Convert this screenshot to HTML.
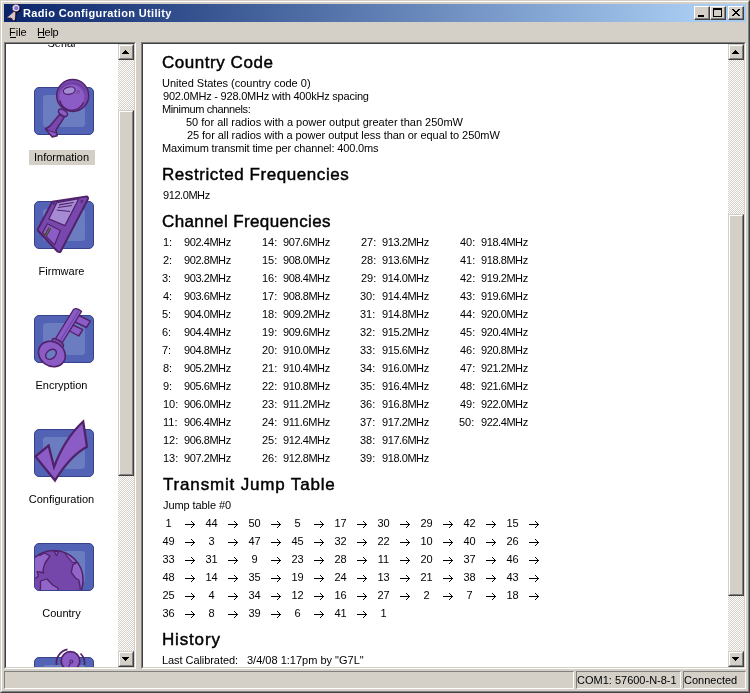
<!DOCTYPE html><html><head><meta charset="utf-8"><style>
html,body{margin:0;padding:0}body{width:750px;height:693px;overflow:hidden;position:relative;background:#D4D0C8;font-family:"Liberation Sans",sans-serif}
.t{position:absolute;white-space:pre;line-height:20px}
.chk{background-color:#fff;background-image:repeating-conic-gradient(#D4D0C8 0 25%,#fff 0 50%);background-size:2px 2px}
</style></head><body><div style="position:absolute;left:0;top:0;width:750px;height:693px;overflow:hidden;will-change:transform">
<div style="position:absolute;left:0px;top:0px;width:750px;height:693px;box-sizing:border-box;border-top:1px solid #D4D0C8;border-left:1px solid #D4D0C8;border-right:1px solid #404040;border-bottom:1px solid #404040"></div>
<div style="position:absolute;left:1px;top:1px;width:748px;height:691px;box-sizing:border-box;border-top:1px solid #FFFFFF;border-left:1px solid #FFFFFF;border-right:1px solid #808080;border-bottom:1px solid #808080"></div>
<div style="position:absolute;left:4px;top:4px;width:742px;height:18px;background:linear-gradient(to right,#0A246A 0px,#A6CAF0 686px)"></div>
<div style="position:absolute;left:694px;top:6px;width:16px;height:14px;background:#D4D0C8;box-sizing:border-box;border-top:1px solid #FFFFFF;border-left:1px solid #FFFFFF;border-right:1px solid #404040;border-bottom:1px solid #404040"></div>
<div style="position:absolute;left:695px;top:7px;width:14px;height:12px;box-sizing:border-box;border-right:1px solid #808080;border-bottom:1px solid #808080"></div>
<div style="position:absolute;left:710px;top:6px;width:16px;height:14px;background:#D4D0C8;box-sizing:border-box;border-top:1px solid #FFFFFF;border-left:1px solid #FFFFFF;border-right:1px solid #404040;border-bottom:1px solid #404040"></div>
<div style="position:absolute;left:711px;top:7px;width:14px;height:12px;box-sizing:border-box;border-right:1px solid #808080;border-bottom:1px solid #808080"></div>
<div style="position:absolute;left:728px;top:6px;width:16px;height:14px;background:#D4D0C8;box-sizing:border-box;border-top:1px solid #FFFFFF;border-left:1px solid #FFFFFF;border-right:1px solid #404040;border-bottom:1px solid #404040"></div>
<div style="position:absolute;left:729px;top:7px;width:14px;height:12px;box-sizing:border-box;border-right:1px solid #808080;border-bottom:1px solid #808080"></div>
<div style="position:absolute;left:698px;top:15px;width:6px;height:2px;background:#000"></div>
<div style="position:absolute;left:713px;top:8px;width:9px;height:9px;box-sizing:border-box;border:1px solid #000;border-top-width:2px"></div>
<svg style="position:absolute;left:732px;top:9px" width="8" height="7" shape-rendering="crispEdges"><rect x="0" y="0" width="2" height="1"/><rect x="6" y="0" width="2" height="1"/><rect x="1" y="1" width="2" height="1"/><rect x="5" y="1" width="2" height="1"/><rect x="2" y="2" width="2" height="1"/><rect x="4" y="2" width="2" height="1"/><rect x="3" y="3" width="2" height="1"/><rect x="3" y="3" width="2" height="1"/><rect x="4" y="4" width="2" height="1"/><rect x="2" y="4" width="2" height="1"/><rect x="5" y="5" width="2" height="1"/><rect x="1" y="5" width="2" height="1"/><rect x="6" y="6" width="2" height="1"/><rect x="0" y="6" width="2" height="1"/></svg>
<svg style="position:absolute;left:4px;top:3px" width="20" height="20" viewBox="4 3 20 20">
<path d="M14.6 11.9 L16.5 12.2 L16 21 L14.5 21.3 L12.2 18.8 L7.5 18.5 Z" fill="#000"/>
<path d="M14.1 11.4 L15.5 11.7 L15 20.3 L13.5 20.6 L11.5 18 L7 17.7 Z" fill="#CFCAC2" stroke="#8A2A80" stroke-width="0.9" stroke-dasharray="1 1.2"/>
<circle cx="16.8" cy="8.8" r="3.8" fill="#000"/>
<circle cx="16" cy="8" r="3.6" fill="#E4E0D8" stroke="#8A2A80" stroke-width="0.9" stroke-dasharray="1.3 1.1"/>
<circle cx="16.2" cy="8.2" r="2.1" fill="#7A78E6"/>
</svg>
<div style="position:absolute;left:10px;top:37px;width:6px;height:1px;background:#000"></div>
<div style="position:absolute;left:38px;top:37px;width:7px;height:1px;background:#000"></div>
<div style="position:absolute;left:4px;top:42px;width:132px;height:627px;background:#fff;box-sizing:border-box;border-top:1px solid #808080;border-left:1px solid #808080;border-right:1px solid #FFFFFF;border-bottom:1px solid #FFFFFF"></div><div style="position:absolute;left:5px;top:43px;width:130px;height:625px;box-sizing:border-box;border-top:1px solid #404040;border-left:1px solid #404040;border-right:1px solid #D4D0C8;border-bottom:1px solid #D4D0C8"></div>
<div style="position:absolute;left:141px;top:42px;width:605px;height:627px;background:#fff;box-sizing:border-box;border-top:1px solid #808080;border-left:1px solid #808080;border-right:1px solid #FFFFFF;border-bottom:1px solid #FFFFFF"></div><div style="position:absolute;left:142px;top:43px;width:603px;height:625px;box-sizing:border-box;border-top:1px solid #404040;border-left:1px solid #404040;border-right:1px solid #D4D0C8;border-bottom:1px solid #D4D0C8"></div>
<div class="chk" style="position:absolute;left:118px;top:60px;width:16px;height:591px;"></div><div style="position:absolute;left:118px;top:44px;width:16px;height:16px;background:#D4D0C8;box-sizing:border-box;border-top:1px solid #D4D0C8;border-left:1px solid #D4D0C8;border-right:1px solid #404040;border-bottom:1px solid #404040"></div><div style="position:absolute;left:119px;top:45px;width:14px;height:14px;box-sizing:border-box;border-top:1px solid #FFFFFF;border-left:1px solid #FFFFFF;border-right:1px solid #808080;border-bottom:1px solid #808080"></div><div style="position:absolute;left:118px;top:651px;width:16px;height:16px;background:#D4D0C8;box-sizing:border-box;border-top:1px solid #D4D0C8;border-left:1px solid #D4D0C8;border-right:1px solid #404040;border-bottom:1px solid #404040"></div><div style="position:absolute;left:119px;top:652px;width:14px;height:14px;box-sizing:border-box;border-top:1px solid #FFFFFF;border-left:1px solid #FFFFFF;border-right:1px solid #808080;border-bottom:1px solid #808080"></div><div style="position:absolute;left:118px;top:110px;width:16px;height:366px;background:#D4D0C8;box-sizing:border-box;border-top:1px solid #D4D0C8;border-left:1px solid #D4D0C8;border-right:1px solid #404040;border-bottom:1px solid #404040"></div><div style="position:absolute;left:119px;top:111px;width:14px;height:364px;box-sizing:border-box;border-top:1px solid #FFFFFF;border-left:1px solid #FFFFFF;border-right:1px solid #808080;border-bottom:1px solid #808080"></div><svg style="position:absolute;left:122px;top:50px" width="7" height="4" shape-rendering="crispEdges"><rect x="3" y="0" width="1" height="1"/><rect x="2" y="1" width="3" height="1"/><rect x="1" y="2" width="5" height="1"/><rect x="0" y="3" width="7" height="1"/></svg><svg style="position:absolute;left:122px;top:657px" width="7" height="4" shape-rendering="crispEdges"><rect x="0" y="0" width="7" height="1"/><rect x="1" y="1" width="5" height="1"/><rect x="2" y="2" width="3" height="1"/><rect x="3" y="3" width="1" height="1"/></svg>
<div class="chk" style="position:absolute;left:728px;top:60px;width:16px;height:591px;"></div><div style="position:absolute;left:728px;top:44px;width:16px;height:16px;background:#D4D0C8;box-sizing:border-box;border-top:1px solid #D4D0C8;border-left:1px solid #D4D0C8;border-right:1px solid #404040;border-bottom:1px solid #404040"></div><div style="position:absolute;left:729px;top:45px;width:14px;height:14px;box-sizing:border-box;border-top:1px solid #FFFFFF;border-left:1px solid #FFFFFF;border-right:1px solid #808080;border-bottom:1px solid #808080"></div><div style="position:absolute;left:728px;top:651px;width:16px;height:16px;background:#D4D0C8;box-sizing:border-box;border-top:1px solid #D4D0C8;border-left:1px solid #D4D0C8;border-right:1px solid #404040;border-bottom:1px solid #404040"></div><div style="position:absolute;left:729px;top:652px;width:14px;height:14px;box-sizing:border-box;border-top:1px solid #FFFFFF;border-left:1px solid #FFFFFF;border-right:1px solid #808080;border-bottom:1px solid #808080"></div><div style="position:absolute;left:728px;top:214px;width:16px;height:382px;background:#D4D0C8;box-sizing:border-box;border-top:1px solid #D4D0C8;border-left:1px solid #D4D0C8;border-right:1px solid #404040;border-bottom:1px solid #404040"></div><div style="position:absolute;left:729px;top:215px;width:14px;height:380px;box-sizing:border-box;border-top:1px solid #FFFFFF;border-left:1px solid #FFFFFF;border-right:1px solid #808080;border-bottom:1px solid #808080"></div><svg style="position:absolute;left:732px;top:50px" width="7" height="4" shape-rendering="crispEdges"><rect x="3" y="0" width="1" height="1"/><rect x="2" y="1" width="3" height="1"/><rect x="1" y="2" width="5" height="1"/><rect x="0" y="3" width="7" height="1"/></svg><svg style="position:absolute;left:732px;top:657px" width="7" height="4" shape-rendering="crispEdges"><rect x="0" y="0" width="7" height="1"/><rect x="1" y="1" width="5" height="1"/><rect x="2" y="2" width="3" height="1"/><rect x="3" y="3" width="1" height="1"/></svg>
<div style="position:absolute;left:4px;top:671px;width:570px;height:18px;box-sizing:border-box;border-top:1px solid #808080;border-left:1px solid #808080;border-right:1px solid #FFFFFF;border-bottom:1px solid #FFFFFF"></div>
<div style="position:absolute;left:576px;top:671px;width:105px;height:18px;box-sizing:border-box;border-top:1px solid #808080;border-left:1px solid #808080;border-right:1px solid #FFFFFF;border-bottom:1px solid #FFFFFF"></div>
<div style="position:absolute;left:683px;top:671px;width:63px;height:18px;box-sizing:border-box;border-top:1px solid #808080;border-left:1px solid #808080;border-right:1px solid #FFFFFF;border-bottom:1px solid #FFFFFF"></div>
<div style="position:absolute;left:29px;top:150px;width:66px;height:15px;background:#D4D0C8"></div>
<svg style="position:absolute;left:6px;top:44px" width="112" height="623" viewBox="6 44 112 623">
<defs>
<clipPath id="c0"><rect x="35" y="-26" width="58" height="46" rx="4"/></clipPath>
<clipPath id="c1"><rect x="35" y="88" width="58" height="46" rx="4"/></clipPath>
<clipPath id="c2"><rect x="35" y="202" width="58" height="46" rx="4"/></clipPath>
<clipPath id="c3"><rect x="35" y="316" width="58" height="46" rx="4"/></clipPath>
<clipPath id="c4"><rect x="35" y="430" width="58" height="46" rx="4"/></clipPath>
<clipPath id="c5"><rect x="35" y="544" width="58" height="46" rx="4"/></clipPath>
<clipPath id="c6"><rect x="35" y="658" width="58" height="46" rx="4"/></clipPath>
</defs>
<rect x="34.5" y="87.5" width="59" height="47" rx="4.5" fill="#5262B4" stroke="#37418C"/>
<rect x="43" y="95" width="42" height="32" rx="3" fill="#6C7CC0"/>
<rect x="34.5" y="201.5" width="59" height="47" rx="4.5" fill="#5262B4" stroke="#37418C"/>
<rect x="43" y="209" width="42" height="32" rx="3" fill="#6C7CC0"/>
<rect x="34.5" y="315.5" width="59" height="47" rx="4.5" fill="#5262B4" stroke="#37418C"/>
<rect x="43" y="323" width="42" height="32" rx="3" fill="#6C7CC0"/>
<rect x="34.5" y="429.5" width="59" height="47" rx="4.5" fill="#5262B4" stroke="#37418C"/>
<rect x="43" y="437" width="42" height="32" rx="3" fill="#6C7CC0"/>
<rect x="34.5" y="543.5" width="59" height="47" rx="4.5" fill="#5262B4" stroke="#37418C"/>
<rect x="43" y="551" width="42" height="32" rx="3" fill="#6C7CC0"/>
<rect x="34.5" y="657.5" width="59" height="47" rx="4.5" fill="#5262B4" stroke="#37418C"/>
<rect x="43" y="665" width="42" height="32" rx="3" fill="#6C7CC0"/>
<g stroke="#50226A" stroke-linejoin="round">
<path d="M59.4 114.8 L64.5 116.8 L56 130 L57.2 135.8 L52.3 136.9 L45.4 129 L50 126 Z" fill="#7848AE" stroke-width="1.5"/>
<path d="M47.3 130 L50.5 131.2 L55.5 132.6 L55.6 135.3 L52.6 135.6 Z" fill="#8C5CC6" stroke-width="0"/>
<path d="M46.5 129.2 L50.5 131.2 L56 132.8" fill="none" stroke-width="1"/>
<ellipse cx="63" cy="112.8" rx="5" ry="2.7" transform="rotate(32 63 112.8)" fill="#8C5CC6" stroke-width="1.4"/>
<circle cx="72.7" cy="95.5" r="16" fill="#7848AE" stroke-width="1.5"/>
<path d="M60 90 A15 15 0 0 1 86 92" fill="none" stroke="#6A3C9E" stroke-width="1.2"/>
<circle cx="71.8" cy="97" r="12.4" fill="#8C5CC6" stroke-width="0"/>
<path d="M59.8 100.5 A12.4 12.4 0 0 0 83.5 102.5" fill="none" stroke-width="1.4"/>
<ellipse cx="69.2" cy="90.6" rx="6" ry="3.6" transform="rotate(-12 69.2 90.6)" fill="#A58BD3" stroke-width="1.2"/>
<circle cx="78.2" cy="92.2" r="1.2" fill="#A58BD3" stroke-width="0.7"/>
</g>
<g stroke="#50226A" stroke-linejoin="round">
<path d="M52.4 201.8 L86.8 196.4 Q89 197.5 87.5 200 L60.5 251.8 Q59 252.5 57.5 251.5 L37.8 230.5 Q37.3 229.5 38 228.8 Z" fill="#7848AE" stroke-width="1.9"/>
<path d="M56.8 202.7 L78.8 198.7 L64.9 225.6 L48.8 218.9 Z" fill="#A58BD3" stroke-width="1.2"/>
<path d="M47.4 223.8 L60.4 230.5 L54.6 244.8 L42.5 232.7 Z" fill="#8C5CC6" stroke-width="1.2"/>
<path d="M49.8 227.8 L45.6 235.9" stroke="#3A3A34" stroke-width="2.8"/>
<path d="M49.8 227.8 L45.6 235.9" stroke="#6E7658" stroke-width="1"/>
<path d="M59 204.8 L73.6 202.5 M58 207.5 L71.8 205.5 M56.8 210 L70 211.5" fill="none" stroke-width="1.2"/>
<circle cx="54.1" cy="203.8" r="1" fill="none" stroke-width="0.9"/>
<circle cx="81.9" cy="201.4" r="1.2" fill="none" stroke-width="0.9"/>
</g>
<g stroke="#50226A" stroke-linejoin="round">
<path d="M78 315 L90.4 321.2 L86.4 327.5 L75 322 Z" fill="#8C5CC6" stroke-width="1.4"/>
<path d="M73 325 L82.8 329.7 L78.8 336 L69.5 331 Z" fill="#8C5CC6" stroke-width="1.4"/>
<path d="M73.5 309.5 Q77 307 81.5 311.5 L62 343 L55 339.5 Z" fill="#8C5CC6" stroke-width="1.4"/>
<path d="M78.5 311 L60 341" fill="none" stroke="#6A44B0" stroke-width="1.1"/>
<ellipse cx="57.8" cy="343" rx="6.5" ry="2.8" transform="rotate(33 57.8 343)" fill="#7848AE" stroke-width="1.4"/>
<ellipse cx="51.9" cy="354" rx="14" ry="12" transform="rotate(35 51.9 354)" fill="#8C5CC6" stroke-width="1.6"/>
<ellipse cx="51" cy="354.3" rx="6" ry="4.3" transform="rotate(-40 51 354.3)" fill="#6C7CC0" stroke-width="1.4"/>
</g>
<path d="M35.5 456.4 L48.6 445.5 L54 467 Q65 438 83.2 421.5 L87 446.8 Q70 456 55 480.5 Z" fill="#8C5CC6" stroke="#50226A" stroke-width="2.3" stroke-linejoin="miter" stroke-miterlimit="6"/>
<clipPath id="gl"><circle cx="53.8" cy="579.8" r="29.3"/></clipPath>
<g clip-path="url(#c5)" stroke="#50226A" stroke-linejoin="round">
<circle cx="53.8" cy="579.8" r="29.3" fill="#7647AA" stroke-width="0"/>
<g clip-path="url(#gl)">
<path d="M28 552 L36 553 L40 555.5 L44.5 553 L50 556 L45 563 L43 570 L43.7 573 L40 572 L37 571.6 L38.5 576 L36 578 L33 579 L28 575 Z" fill="#9266C8" stroke-width="1.3"/>
<path d="M40.5 581 L47 579 L52.7 585 L57.9 588 L58.5 597 L39 597 L40.5 588 Z" fill="#9266C8" stroke-width="1.3"/>
<path d="M54.1 551.5 L58.6 551.8 L56.4 555.6 Z" fill="#9266C8" stroke-width="1.1"/>
<path d="M64 552 L67.2 556.3 L72 562 L75.8 562.7 L78 560 L74 555 Z" fill="#9266C8" stroke-width="1.1"/>
<path d="M79 561 L72.8 564.9 L71.3 572.4 L75.8 578.3 L78.8 580 L80 586 L80.5 597 L92 597 L92 558 Z" fill="#9266C8" stroke-width="1.3"/>
</g>
<circle cx="53.8" cy="579.8" r="29.3" fill="none" stroke-width="1.5"/>
</g>
<g stroke="#50226A" fill="none">
<path d="M56.5 665 A14 14 0 0 1 67.5 649.3" stroke-width="1.7"/>
<path d="M80.5 653.5 A14 14 0 0 1 84.5 665" stroke-width="1.7"/>
<circle cx="70.5" cy="661" r="9.3" fill="#8C5CC6" stroke-width="1.7"/>
<circle cx="71.3" cy="661.5" r="1.5" stroke-width="1.1"/>
<path d="M70.5 663 L68.5 667" stroke-width="1.1"/>
</g>
</svg>
<div class="t" style="left:23px;top:3px;font:bold 11px 'Liberation Sans',sans-serif;line-height:20px;letter-spacing:0.346px;color:#fff">Radio Configuration Utility</div>
<div class="t" style="left:9px;top:22px;font:11px 'Liberation Sans',sans-serif;line-height:20px;color:#000">File</div>
<div class="t" style="left:37px;top:22px;font:11px 'Liberation Sans',sans-serif;line-height:20px;letter-spacing:-0.333px;color:#000">Help</div>
<div class="t" style="left:162px;top:53px;font:17px 'Liberation Sans',sans-serif;line-height:20px;letter-spacing:0.545px;-webkit-text-stroke:0.45px #000;color:#000">Country Code</div>
<div class="t" style="left:162px;top:165px;font:17px 'Liberation Sans',sans-serif;line-height:20px;letter-spacing:0.571px;-webkit-text-stroke:0.45px #000;color:#000">Restricted Frequencies</div>
<div class="t" style="left:162px;top:212px;font:17px 'Liberation Sans',sans-serif;line-height:20px;letter-spacing:0.389px;-webkit-text-stroke:0.45px #000;color:#000">Channel Frequencies</div>
<div class="t" style="left:163px;top:475px;font:17px 'Liberation Sans',sans-serif;line-height:20px;letter-spacing:0.833px;-webkit-text-stroke:0.45px #000;color:#000">Transmit Jump Table</div>
<div class="t" style="left:162px;top:630px;font:17px 'Liberation Sans',sans-serif;line-height:20px;letter-spacing:0.833px;-webkit-text-stroke:0.45px #000;color:#000">History</div>
<div class="t" style="left:162px;top:73px;font:11px 'Liberation Sans',sans-serif;line-height:20px;color:#000">United States (country code 0)</div>
<div class="t" style="left:163px;top:86px;font:11px 'Liberation Sans',sans-serif;line-height:20px;letter-spacing:-0.211px;color:#000">902.0MHz - 928.0MHz with 400kHz spacing</div>
<div class="t" style="left:162px;top:99px;font:11px 'Liberation Sans',sans-serif;line-height:20px;letter-spacing:-0.375px;color:#000">Minimum channels:</div>
<div class="t" style="left:186px;top:112px;font:11px 'Liberation Sans',sans-serif;line-height:20px;color:#000">50 for all radios with a power output greater than 250mW</div>
<div class="t" style="left:187px;top:125px;font:11px 'Liberation Sans',sans-serif;line-height:20px;letter-spacing:-0.062px;color:#000">25 for all radios with a power output less than or equal to 250mW</div>
<div class="t" style="left:162px;top:138px;font:11px 'Liberation Sans',sans-serif;line-height:20px;letter-spacing:-0.146px;color:#000">Maximum transmit time per channel: 400.0ms</div>
<div class="t" style="left:163px;top:185px;font:11px 'Liberation Sans',sans-serif;line-height:20px;letter-spacing:-0.429px;color:#000">912.0MHz</div>
<div class="t" style="left:163px;top:495px;font:11px 'Liberation Sans',sans-serif;line-height:20px;letter-spacing:-0.083px;color:#000">Jump table #0</div>
<div class="t" style="left:162px;top:650px;font:11px 'Liberation Sans',sans-serif;line-height:20px;letter-spacing:-0.067px;color:#000">Last Calibrated:</div>
<div class="t" style="left:247px;top:650px;font:11px 'Liberation Sans',sans-serif;line-height:20px;color:#000">3/4/08 1:17pm by &quot;G7L&quot;</div>
<div class="t" style="left:577px;top:670px;font:11px 'Liberation Sans',sans-serif;line-height:20px;color:#000">COM1: 57600-N-8-1</div>
<div class="t" style="left:684px;top:670px;font:11px 'Liberation Sans',sans-serif;line-height:20px;color:#000">Connected</div>
<div class="t" style="left:163px;top:232px;font:11px 'Liberation Sans',sans-serif;line-height:20px;color:#000">1:</div>
<div class="t" style="left:184px;top:232px;font:11px 'Liberation Sans',sans-serif;line-height:20px;letter-spacing:-0.429px;color:#000">902.4MHz</div>
<div class="t" style="left:163px;top:250px;font:11px 'Liberation Sans',sans-serif;line-height:20px;color:#000">2:</div>
<div class="t" style="left:184px;top:250px;font:11px 'Liberation Sans',sans-serif;line-height:20px;letter-spacing:-0.429px;color:#000">902.8MHz</div>
<div class="t" style="left:162px;top:268px;font:11px 'Liberation Sans',sans-serif;line-height:20px;color:#000">3:</div>
<div class="t" style="left:184px;top:268px;font:11px 'Liberation Sans',sans-serif;line-height:20px;letter-spacing:-0.429px;color:#000">903.2MHz</div>
<div class="t" style="left:163px;top:286px;font:11px 'Liberation Sans',sans-serif;line-height:20px;color:#000">4:</div>
<div class="t" style="left:184px;top:286px;font:11px 'Liberation Sans',sans-serif;line-height:20px;letter-spacing:-0.429px;color:#000">903.6MHz</div>
<div class="t" style="left:162px;top:304px;font:11px 'Liberation Sans',sans-serif;line-height:20px;color:#000">5:</div>
<div class="t" style="left:184px;top:304px;font:11px 'Liberation Sans',sans-serif;line-height:20px;letter-spacing:-0.429px;color:#000">904.0MHz</div>
<div class="t" style="left:162px;top:322px;font:11px 'Liberation Sans',sans-serif;line-height:20px;color:#000">6:</div>
<div class="t" style="left:184px;top:322px;font:11px 'Liberation Sans',sans-serif;line-height:20px;letter-spacing:-0.429px;color:#000">904.4MHz</div>
<div class="t" style="left:162px;top:340px;font:11px 'Liberation Sans',sans-serif;line-height:20px;color:#000">7:</div>
<div class="t" style="left:184px;top:340px;font:11px 'Liberation Sans',sans-serif;line-height:20px;letter-spacing:-0.429px;color:#000">904.8MHz</div>
<div class="t" style="left:163px;top:358px;font:11px 'Liberation Sans',sans-serif;line-height:20px;color:#000">8:</div>
<div class="t" style="left:184px;top:358px;font:11px 'Liberation Sans',sans-serif;line-height:20px;letter-spacing:-0.429px;color:#000">905.2MHz</div>
<div class="t" style="left:163px;top:376px;font:11px 'Liberation Sans',sans-serif;line-height:20px;color:#000">9:</div>
<div class="t" style="left:184px;top:376px;font:11px 'Liberation Sans',sans-serif;line-height:20px;letter-spacing:-0.429px;color:#000">905.6MHz</div>
<div class="t" style="left:163px;top:394px;font:11px 'Liberation Sans',sans-serif;line-height:20px;color:#000">10:</div>
<div class="t" style="left:184px;top:394px;font:11px 'Liberation Sans',sans-serif;line-height:20px;letter-spacing:-0.429px;color:#000">906.0MHz</div>
<div class="t" style="left:163px;top:412px;font:11px 'Liberation Sans',sans-serif;line-height:20px;color:#000">11:</div>
<div class="t" style="left:184px;top:412px;font:11px 'Liberation Sans',sans-serif;line-height:20px;letter-spacing:-0.429px;color:#000">906.4MHz</div>
<div class="t" style="left:163px;top:430px;font:11px 'Liberation Sans',sans-serif;line-height:20px;color:#000">12:</div>
<div class="t" style="left:184px;top:430px;font:11px 'Liberation Sans',sans-serif;line-height:20px;letter-spacing:-0.429px;color:#000">906.8MHz</div>
<div class="t" style="left:163px;top:448px;font:11px 'Liberation Sans',sans-serif;line-height:20px;color:#000">13:</div>
<div class="t" style="left:184px;top:448px;font:11px 'Liberation Sans',sans-serif;line-height:20px;letter-spacing:-0.429px;color:#000">907.2MHz</div>
<div class="t" style="left:262px;top:232px;font:11px 'Liberation Sans',sans-serif;line-height:20px;color:#000">14:</div>
<div class="t" style="left:283px;top:232px;font:11px 'Liberation Sans',sans-serif;line-height:20px;letter-spacing:-0.429px;color:#000">907.6MHz</div>
<div class="t" style="left:262px;top:250px;font:11px 'Liberation Sans',sans-serif;line-height:20px;color:#000">15:</div>
<div class="t" style="left:283px;top:250px;font:11px 'Liberation Sans',sans-serif;line-height:20px;letter-spacing:-0.429px;color:#000">908.0MHz</div>
<div class="t" style="left:262px;top:268px;font:11px 'Liberation Sans',sans-serif;line-height:20px;color:#000">16:</div>
<div class="t" style="left:283px;top:268px;font:11px 'Liberation Sans',sans-serif;line-height:20px;letter-spacing:-0.429px;color:#000">908.4MHz</div>
<div class="t" style="left:262px;top:286px;font:11px 'Liberation Sans',sans-serif;line-height:20px;color:#000">17:</div>
<div class="t" style="left:283px;top:286px;font:11px 'Liberation Sans',sans-serif;line-height:20px;letter-spacing:-0.429px;color:#000">908.8MHz</div>
<div class="t" style="left:262px;top:304px;font:11px 'Liberation Sans',sans-serif;line-height:20px;color:#000">18:</div>
<div class="t" style="left:283px;top:304px;font:11px 'Liberation Sans',sans-serif;line-height:20px;letter-spacing:-0.429px;color:#000">909.2MHz</div>
<div class="t" style="left:262px;top:322px;font:11px 'Liberation Sans',sans-serif;line-height:20px;color:#000">19:</div>
<div class="t" style="left:283px;top:322px;font:11px 'Liberation Sans',sans-serif;line-height:20px;letter-spacing:-0.429px;color:#000">909.6MHz</div>
<div class="t" style="left:262px;top:340px;font:11px 'Liberation Sans',sans-serif;line-height:20px;color:#000">20:</div>
<div class="t" style="left:283px;top:340px;font:11px 'Liberation Sans',sans-serif;line-height:20px;letter-spacing:-0.429px;color:#000">910.0MHz</div>
<div class="t" style="left:262px;top:358px;font:11px 'Liberation Sans',sans-serif;line-height:20px;color:#000">21:</div>
<div class="t" style="left:283px;top:358px;font:11px 'Liberation Sans',sans-serif;line-height:20px;letter-spacing:-0.429px;color:#000">910.4MHz</div>
<div class="t" style="left:262px;top:376px;font:11px 'Liberation Sans',sans-serif;line-height:20px;color:#000">22:</div>
<div class="t" style="left:283px;top:376px;font:11px 'Liberation Sans',sans-serif;line-height:20px;letter-spacing:-0.429px;color:#000">910.8MHz</div>
<div class="t" style="left:262px;top:394px;font:11px 'Liberation Sans',sans-serif;line-height:20px;color:#000">23:</div>
<div class="t" style="left:283px;top:394px;font:11px 'Liberation Sans',sans-serif;line-height:20px;letter-spacing:-0.286px;color:#000">911.2MHz</div>
<div class="t" style="left:262px;top:412px;font:11px 'Liberation Sans',sans-serif;line-height:20px;color:#000">24:</div>
<div class="t" style="left:283px;top:412px;font:11px 'Liberation Sans',sans-serif;line-height:20px;letter-spacing:-0.286px;color:#000">911.6MHz</div>
<div class="t" style="left:262px;top:430px;font:11px 'Liberation Sans',sans-serif;line-height:20px;color:#000">25:</div>
<div class="t" style="left:283px;top:430px;font:11px 'Liberation Sans',sans-serif;line-height:20px;letter-spacing:-0.429px;color:#000">912.4MHz</div>
<div class="t" style="left:262px;top:448px;font:11px 'Liberation Sans',sans-serif;line-height:20px;color:#000">26:</div>
<div class="t" style="left:283px;top:448px;font:11px 'Liberation Sans',sans-serif;line-height:20px;letter-spacing:-0.429px;color:#000">912.8MHz</div>
<div class="t" style="left:361px;top:232px;font:11px 'Liberation Sans',sans-serif;line-height:20px;color:#000">27:</div>
<div class="t" style="left:382px;top:232px;font:11px 'Liberation Sans',sans-serif;line-height:20px;letter-spacing:-0.429px;color:#000">913.2MHz</div>
<div class="t" style="left:361px;top:250px;font:11px 'Liberation Sans',sans-serif;line-height:20px;color:#000">28:</div>
<div class="t" style="left:382px;top:250px;font:11px 'Liberation Sans',sans-serif;line-height:20px;letter-spacing:-0.429px;color:#000">913.6MHz</div>
<div class="t" style="left:361px;top:268px;font:11px 'Liberation Sans',sans-serif;line-height:20px;color:#000">29:</div>
<div class="t" style="left:382px;top:268px;font:11px 'Liberation Sans',sans-serif;line-height:20px;letter-spacing:-0.429px;color:#000">914.0MHz</div>
<div class="t" style="left:360px;top:286px;font:11px 'Liberation Sans',sans-serif;line-height:20px;color:#000">30:</div>
<div class="t" style="left:382px;top:286px;font:11px 'Liberation Sans',sans-serif;line-height:20px;letter-spacing:-0.429px;color:#000">914.4MHz</div>
<div class="t" style="left:360px;top:304px;font:11px 'Liberation Sans',sans-serif;line-height:20px;color:#000">31:</div>
<div class="t" style="left:382px;top:304px;font:11px 'Liberation Sans',sans-serif;line-height:20px;letter-spacing:-0.429px;color:#000">914.8MHz</div>
<div class="t" style="left:360px;top:322px;font:11px 'Liberation Sans',sans-serif;line-height:20px;color:#000">32:</div>
<div class="t" style="left:382px;top:322px;font:11px 'Liberation Sans',sans-serif;line-height:20px;letter-spacing:-0.429px;color:#000">915.2MHz</div>
<div class="t" style="left:360px;top:340px;font:11px 'Liberation Sans',sans-serif;line-height:20px;color:#000">33:</div>
<div class="t" style="left:382px;top:340px;font:11px 'Liberation Sans',sans-serif;line-height:20px;letter-spacing:-0.429px;color:#000">915.6MHz</div>
<div class="t" style="left:360px;top:358px;font:11px 'Liberation Sans',sans-serif;line-height:20px;color:#000">34:</div>
<div class="t" style="left:382px;top:358px;font:11px 'Liberation Sans',sans-serif;line-height:20px;letter-spacing:-0.429px;color:#000">916.0MHz</div>
<div class="t" style="left:360px;top:376px;font:11px 'Liberation Sans',sans-serif;line-height:20px;color:#000">35:</div>
<div class="t" style="left:382px;top:376px;font:11px 'Liberation Sans',sans-serif;line-height:20px;letter-spacing:-0.429px;color:#000">916.4MHz</div>
<div class="t" style="left:360px;top:394px;font:11px 'Liberation Sans',sans-serif;line-height:20px;color:#000">36:</div>
<div class="t" style="left:382px;top:394px;font:11px 'Liberation Sans',sans-serif;line-height:20px;letter-spacing:-0.429px;color:#000">916.8MHz</div>
<div class="t" style="left:360px;top:412px;font:11px 'Liberation Sans',sans-serif;line-height:20px;color:#000">37:</div>
<div class="t" style="left:382px;top:412px;font:11px 'Liberation Sans',sans-serif;line-height:20px;letter-spacing:-0.429px;color:#000">917.2MHz</div>
<div class="t" style="left:360px;top:430px;font:11px 'Liberation Sans',sans-serif;line-height:20px;color:#000">38:</div>
<div class="t" style="left:382px;top:430px;font:11px 'Liberation Sans',sans-serif;line-height:20px;letter-spacing:-0.429px;color:#000">917.6MHz</div>
<div class="t" style="left:360px;top:448px;font:11px 'Liberation Sans',sans-serif;line-height:20px;color:#000">39:</div>
<div class="t" style="left:382px;top:448px;font:11px 'Liberation Sans',sans-serif;line-height:20px;letter-spacing:-0.429px;color:#000">918.0MHz</div>
<div class="t" style="left:460px;top:232px;font:11px 'Liberation Sans',sans-serif;line-height:20px;color:#000">40:</div>
<div class="t" style="left:481px;top:232px;font:11px 'Liberation Sans',sans-serif;line-height:20px;letter-spacing:-0.429px;color:#000">918.4MHz</div>
<div class="t" style="left:460px;top:250px;font:11px 'Liberation Sans',sans-serif;line-height:20px;color:#000">41:</div>
<div class="t" style="left:481px;top:250px;font:11px 'Liberation Sans',sans-serif;line-height:20px;letter-spacing:-0.429px;color:#000">918.8MHz</div>
<div class="t" style="left:460px;top:268px;font:11px 'Liberation Sans',sans-serif;line-height:20px;color:#000">42:</div>
<div class="t" style="left:481px;top:268px;font:11px 'Liberation Sans',sans-serif;line-height:20px;letter-spacing:-0.429px;color:#000">919.2MHz</div>
<div class="t" style="left:460px;top:286px;font:11px 'Liberation Sans',sans-serif;line-height:20px;color:#000">43:</div>
<div class="t" style="left:481px;top:286px;font:11px 'Liberation Sans',sans-serif;line-height:20px;letter-spacing:-0.429px;color:#000">919.6MHz</div>
<div class="t" style="left:460px;top:304px;font:11px 'Liberation Sans',sans-serif;line-height:20px;color:#000">44:</div>
<div class="t" style="left:481px;top:304px;font:11px 'Liberation Sans',sans-serif;line-height:20px;letter-spacing:-0.429px;color:#000">920.0MHz</div>
<div class="t" style="left:460px;top:322px;font:11px 'Liberation Sans',sans-serif;line-height:20px;color:#000">45:</div>
<div class="t" style="left:481px;top:322px;font:11px 'Liberation Sans',sans-serif;line-height:20px;letter-spacing:-0.429px;color:#000">920.4MHz</div>
<div class="t" style="left:460px;top:340px;font:11px 'Liberation Sans',sans-serif;line-height:20px;color:#000">46:</div>
<div class="t" style="left:481px;top:340px;font:11px 'Liberation Sans',sans-serif;line-height:20px;letter-spacing:-0.429px;color:#000">920.8MHz</div>
<div class="t" style="left:460px;top:358px;font:11px 'Liberation Sans',sans-serif;line-height:20px;color:#000">47:</div>
<div class="t" style="left:481px;top:358px;font:11px 'Liberation Sans',sans-serif;line-height:20px;letter-spacing:-0.429px;color:#000">921.2MHz</div>
<div class="t" style="left:460px;top:376px;font:11px 'Liberation Sans',sans-serif;line-height:20px;color:#000">48:</div>
<div class="t" style="left:481px;top:376px;font:11px 'Liberation Sans',sans-serif;line-height:20px;letter-spacing:-0.429px;color:#000">921.6MHz</div>
<div class="t" style="left:460px;top:394px;font:11px 'Liberation Sans',sans-serif;line-height:20px;color:#000">49:</div>
<div class="t" style="left:481px;top:394px;font:11px 'Liberation Sans',sans-serif;line-height:20px;letter-spacing:-0.429px;color:#000">922.0MHz</div>
<div class="t" style="left:459px;top:412px;font:11px 'Liberation Sans',sans-serif;line-height:20px;color:#000">50:</div>
<div class="t" style="left:481px;top:412px;font:11px 'Liberation Sans',sans-serif;line-height:20px;letter-spacing:-0.429px;color:#000">922.4MHz</div>
<div style="position:absolute;left:6px;top:44px;width:112px;height:623px;overflow:hidden">
<div class="t" style="left:-4.5px;top:-11px;width:120px;text-align:center;font:11px 'Liberation Sans',sans-serif;line-height:20px">Serial</div>
<div class="t" style="left:-4.5px;top:103px;width:120px;text-align:center;font:11px 'Liberation Sans',sans-serif;line-height:20px">Information</div>
<div class="t" style="left:-4.5px;top:217px;width:120px;text-align:center;font:11px 'Liberation Sans',sans-serif;line-height:20px">Firmware</div>
<div class="t" style="left:-4.5px;top:331px;width:120px;text-align:center;font:11px 'Liberation Sans',sans-serif;line-height:20px">Encryption</div>
<div class="t" style="left:-4.5px;top:445px;width:120px;text-align:center;font:11px 'Liberation Sans',sans-serif;line-height:20px">Configuration</div>
<div class="t" style="left:-4.5px;top:559px;width:120px;text-align:center;font:11px 'Liberation Sans',sans-serif;line-height:20px">Country</div>
</div>
<div class="t" style="left:148.5px;top:513px;width:40px;text-align:center;font:11px 'Liberation Sans',sans-serif;line-height:20px">1</div>
<svg style="position:absolute;left:185px;top:521px" width="10" height="7" shape-rendering="crispEdges"><rect x="0" y="3" width="10" height="1"/><rect x="6" y="0" width="1" height="1"/><rect x="7" y="1" width="1" height="1"/><rect x="8" y="2" width="1" height="3"/><rect x="7" y="5" width="1" height="1"/><rect x="6" y="6" width="1" height="1"/></svg>
<div class="t" style="left:191.5px;top:513px;width:40px;text-align:center;font:11px 'Liberation Sans',sans-serif;line-height:20px">44</div>
<svg style="position:absolute;left:228px;top:521px" width="10" height="7" shape-rendering="crispEdges"><rect x="0" y="3" width="10" height="1"/><rect x="6" y="0" width="1" height="1"/><rect x="7" y="1" width="1" height="1"/><rect x="8" y="2" width="1" height="3"/><rect x="7" y="5" width="1" height="1"/><rect x="6" y="6" width="1" height="1"/></svg>
<div class="t" style="left:234.5px;top:513px;width:40px;text-align:center;font:11px 'Liberation Sans',sans-serif;line-height:20px">50</div>
<svg style="position:absolute;left:271px;top:521px" width="10" height="7" shape-rendering="crispEdges"><rect x="0" y="3" width="10" height="1"/><rect x="6" y="0" width="1" height="1"/><rect x="7" y="1" width="1" height="1"/><rect x="8" y="2" width="1" height="3"/><rect x="7" y="5" width="1" height="1"/><rect x="6" y="6" width="1" height="1"/></svg>
<div class="t" style="left:277.5px;top:513px;width:40px;text-align:center;font:11px 'Liberation Sans',sans-serif;line-height:20px">5</div>
<svg style="position:absolute;left:314px;top:521px" width="10" height="7" shape-rendering="crispEdges"><rect x="0" y="3" width="10" height="1"/><rect x="6" y="0" width="1" height="1"/><rect x="7" y="1" width="1" height="1"/><rect x="8" y="2" width="1" height="3"/><rect x="7" y="5" width="1" height="1"/><rect x="6" y="6" width="1" height="1"/></svg>
<div class="t" style="left:320.5px;top:513px;width:40px;text-align:center;font:11px 'Liberation Sans',sans-serif;line-height:20px">17</div>
<svg style="position:absolute;left:357px;top:521px" width="10" height="7" shape-rendering="crispEdges"><rect x="0" y="3" width="10" height="1"/><rect x="6" y="0" width="1" height="1"/><rect x="7" y="1" width="1" height="1"/><rect x="8" y="2" width="1" height="3"/><rect x="7" y="5" width="1" height="1"/><rect x="6" y="6" width="1" height="1"/></svg>
<div class="t" style="left:363.5px;top:513px;width:40px;text-align:center;font:11px 'Liberation Sans',sans-serif;line-height:20px">30</div>
<svg style="position:absolute;left:400px;top:521px" width="10" height="7" shape-rendering="crispEdges"><rect x="0" y="3" width="10" height="1"/><rect x="6" y="0" width="1" height="1"/><rect x="7" y="1" width="1" height="1"/><rect x="8" y="2" width="1" height="3"/><rect x="7" y="5" width="1" height="1"/><rect x="6" y="6" width="1" height="1"/></svg>
<div class="t" style="left:406.5px;top:513px;width:40px;text-align:center;font:11px 'Liberation Sans',sans-serif;line-height:20px">29</div>
<svg style="position:absolute;left:443px;top:521px" width="10" height="7" shape-rendering="crispEdges"><rect x="0" y="3" width="10" height="1"/><rect x="6" y="0" width="1" height="1"/><rect x="7" y="1" width="1" height="1"/><rect x="8" y="2" width="1" height="3"/><rect x="7" y="5" width="1" height="1"/><rect x="6" y="6" width="1" height="1"/></svg>
<div class="t" style="left:449.5px;top:513px;width:40px;text-align:center;font:11px 'Liberation Sans',sans-serif;line-height:20px">42</div>
<svg style="position:absolute;left:486px;top:521px" width="10" height="7" shape-rendering="crispEdges"><rect x="0" y="3" width="10" height="1"/><rect x="6" y="0" width="1" height="1"/><rect x="7" y="1" width="1" height="1"/><rect x="8" y="2" width="1" height="3"/><rect x="7" y="5" width="1" height="1"/><rect x="6" y="6" width="1" height="1"/></svg>
<div class="t" style="left:492.5px;top:513px;width:40px;text-align:center;font:11px 'Liberation Sans',sans-serif;line-height:20px">15</div>
<svg style="position:absolute;left:529px;top:521px" width="10" height="7" shape-rendering="crispEdges"><rect x="0" y="3" width="10" height="1"/><rect x="6" y="0" width="1" height="1"/><rect x="7" y="1" width="1" height="1"/><rect x="8" y="2" width="1" height="3"/><rect x="7" y="5" width="1" height="1"/><rect x="6" y="6" width="1" height="1"/></svg>
<div class="t" style="left:148.5px;top:531px;width:40px;text-align:center;font:11px 'Liberation Sans',sans-serif;line-height:20px">49</div>
<svg style="position:absolute;left:185px;top:539px" width="10" height="7" shape-rendering="crispEdges"><rect x="0" y="3" width="10" height="1"/><rect x="6" y="0" width="1" height="1"/><rect x="7" y="1" width="1" height="1"/><rect x="8" y="2" width="1" height="3"/><rect x="7" y="5" width="1" height="1"/><rect x="6" y="6" width="1" height="1"/></svg>
<div class="t" style="left:191.5px;top:531px;width:40px;text-align:center;font:11px 'Liberation Sans',sans-serif;line-height:20px">3</div>
<svg style="position:absolute;left:228px;top:539px" width="10" height="7" shape-rendering="crispEdges"><rect x="0" y="3" width="10" height="1"/><rect x="6" y="0" width="1" height="1"/><rect x="7" y="1" width="1" height="1"/><rect x="8" y="2" width="1" height="3"/><rect x="7" y="5" width="1" height="1"/><rect x="6" y="6" width="1" height="1"/></svg>
<div class="t" style="left:234.5px;top:531px;width:40px;text-align:center;font:11px 'Liberation Sans',sans-serif;line-height:20px">47</div>
<svg style="position:absolute;left:271px;top:539px" width="10" height="7" shape-rendering="crispEdges"><rect x="0" y="3" width="10" height="1"/><rect x="6" y="0" width="1" height="1"/><rect x="7" y="1" width="1" height="1"/><rect x="8" y="2" width="1" height="3"/><rect x="7" y="5" width="1" height="1"/><rect x="6" y="6" width="1" height="1"/></svg>
<div class="t" style="left:277.5px;top:531px;width:40px;text-align:center;font:11px 'Liberation Sans',sans-serif;line-height:20px">45</div>
<svg style="position:absolute;left:314px;top:539px" width="10" height="7" shape-rendering="crispEdges"><rect x="0" y="3" width="10" height="1"/><rect x="6" y="0" width="1" height="1"/><rect x="7" y="1" width="1" height="1"/><rect x="8" y="2" width="1" height="3"/><rect x="7" y="5" width="1" height="1"/><rect x="6" y="6" width="1" height="1"/></svg>
<div class="t" style="left:320.5px;top:531px;width:40px;text-align:center;font:11px 'Liberation Sans',sans-serif;line-height:20px">32</div>
<svg style="position:absolute;left:357px;top:539px" width="10" height="7" shape-rendering="crispEdges"><rect x="0" y="3" width="10" height="1"/><rect x="6" y="0" width="1" height="1"/><rect x="7" y="1" width="1" height="1"/><rect x="8" y="2" width="1" height="3"/><rect x="7" y="5" width="1" height="1"/><rect x="6" y="6" width="1" height="1"/></svg>
<div class="t" style="left:363.5px;top:531px;width:40px;text-align:center;font:11px 'Liberation Sans',sans-serif;line-height:20px">22</div>
<svg style="position:absolute;left:400px;top:539px" width="10" height="7" shape-rendering="crispEdges"><rect x="0" y="3" width="10" height="1"/><rect x="6" y="0" width="1" height="1"/><rect x="7" y="1" width="1" height="1"/><rect x="8" y="2" width="1" height="3"/><rect x="7" y="5" width="1" height="1"/><rect x="6" y="6" width="1" height="1"/></svg>
<div class="t" style="left:406.5px;top:531px;width:40px;text-align:center;font:11px 'Liberation Sans',sans-serif;line-height:20px">10</div>
<svg style="position:absolute;left:443px;top:539px" width="10" height="7" shape-rendering="crispEdges"><rect x="0" y="3" width="10" height="1"/><rect x="6" y="0" width="1" height="1"/><rect x="7" y="1" width="1" height="1"/><rect x="8" y="2" width="1" height="3"/><rect x="7" y="5" width="1" height="1"/><rect x="6" y="6" width="1" height="1"/></svg>
<div class="t" style="left:449.5px;top:531px;width:40px;text-align:center;font:11px 'Liberation Sans',sans-serif;line-height:20px">40</div>
<svg style="position:absolute;left:486px;top:539px" width="10" height="7" shape-rendering="crispEdges"><rect x="0" y="3" width="10" height="1"/><rect x="6" y="0" width="1" height="1"/><rect x="7" y="1" width="1" height="1"/><rect x="8" y="2" width="1" height="3"/><rect x="7" y="5" width="1" height="1"/><rect x="6" y="6" width="1" height="1"/></svg>
<div class="t" style="left:492.5px;top:531px;width:40px;text-align:center;font:11px 'Liberation Sans',sans-serif;line-height:20px">26</div>
<svg style="position:absolute;left:529px;top:539px" width="10" height="7" shape-rendering="crispEdges"><rect x="0" y="3" width="10" height="1"/><rect x="6" y="0" width="1" height="1"/><rect x="7" y="1" width="1" height="1"/><rect x="8" y="2" width="1" height="3"/><rect x="7" y="5" width="1" height="1"/><rect x="6" y="6" width="1" height="1"/></svg>
<div class="t" style="left:148.5px;top:549px;width:40px;text-align:center;font:11px 'Liberation Sans',sans-serif;line-height:20px">33</div>
<svg style="position:absolute;left:185px;top:557px" width="10" height="7" shape-rendering="crispEdges"><rect x="0" y="3" width="10" height="1"/><rect x="6" y="0" width="1" height="1"/><rect x="7" y="1" width="1" height="1"/><rect x="8" y="2" width="1" height="3"/><rect x="7" y="5" width="1" height="1"/><rect x="6" y="6" width="1" height="1"/></svg>
<div class="t" style="left:191.5px;top:549px;width:40px;text-align:center;font:11px 'Liberation Sans',sans-serif;line-height:20px">31</div>
<svg style="position:absolute;left:228px;top:557px" width="10" height="7" shape-rendering="crispEdges"><rect x="0" y="3" width="10" height="1"/><rect x="6" y="0" width="1" height="1"/><rect x="7" y="1" width="1" height="1"/><rect x="8" y="2" width="1" height="3"/><rect x="7" y="5" width="1" height="1"/><rect x="6" y="6" width="1" height="1"/></svg>
<div class="t" style="left:234.5px;top:549px;width:40px;text-align:center;font:11px 'Liberation Sans',sans-serif;line-height:20px">9</div>
<svg style="position:absolute;left:271px;top:557px" width="10" height="7" shape-rendering="crispEdges"><rect x="0" y="3" width="10" height="1"/><rect x="6" y="0" width="1" height="1"/><rect x="7" y="1" width="1" height="1"/><rect x="8" y="2" width="1" height="3"/><rect x="7" y="5" width="1" height="1"/><rect x="6" y="6" width="1" height="1"/></svg>
<div class="t" style="left:277.5px;top:549px;width:40px;text-align:center;font:11px 'Liberation Sans',sans-serif;line-height:20px">23</div>
<svg style="position:absolute;left:314px;top:557px" width="10" height="7" shape-rendering="crispEdges"><rect x="0" y="3" width="10" height="1"/><rect x="6" y="0" width="1" height="1"/><rect x="7" y="1" width="1" height="1"/><rect x="8" y="2" width="1" height="3"/><rect x="7" y="5" width="1" height="1"/><rect x="6" y="6" width="1" height="1"/></svg>
<div class="t" style="left:320.5px;top:549px;width:40px;text-align:center;font:11px 'Liberation Sans',sans-serif;line-height:20px">28</div>
<svg style="position:absolute;left:357px;top:557px" width="10" height="7" shape-rendering="crispEdges"><rect x="0" y="3" width="10" height="1"/><rect x="6" y="0" width="1" height="1"/><rect x="7" y="1" width="1" height="1"/><rect x="8" y="2" width="1" height="3"/><rect x="7" y="5" width="1" height="1"/><rect x="6" y="6" width="1" height="1"/></svg>
<div class="t" style="left:363.5px;top:549px;width:40px;text-align:center;font:11px 'Liberation Sans',sans-serif;line-height:20px">11</div>
<svg style="position:absolute;left:400px;top:557px" width="10" height="7" shape-rendering="crispEdges"><rect x="0" y="3" width="10" height="1"/><rect x="6" y="0" width="1" height="1"/><rect x="7" y="1" width="1" height="1"/><rect x="8" y="2" width="1" height="3"/><rect x="7" y="5" width="1" height="1"/><rect x="6" y="6" width="1" height="1"/></svg>
<div class="t" style="left:406.5px;top:549px;width:40px;text-align:center;font:11px 'Liberation Sans',sans-serif;line-height:20px">20</div>
<svg style="position:absolute;left:443px;top:557px" width="10" height="7" shape-rendering="crispEdges"><rect x="0" y="3" width="10" height="1"/><rect x="6" y="0" width="1" height="1"/><rect x="7" y="1" width="1" height="1"/><rect x="8" y="2" width="1" height="3"/><rect x="7" y="5" width="1" height="1"/><rect x="6" y="6" width="1" height="1"/></svg>
<div class="t" style="left:449.5px;top:549px;width:40px;text-align:center;font:11px 'Liberation Sans',sans-serif;line-height:20px">37</div>
<svg style="position:absolute;left:486px;top:557px" width="10" height="7" shape-rendering="crispEdges"><rect x="0" y="3" width="10" height="1"/><rect x="6" y="0" width="1" height="1"/><rect x="7" y="1" width="1" height="1"/><rect x="8" y="2" width="1" height="3"/><rect x="7" y="5" width="1" height="1"/><rect x="6" y="6" width="1" height="1"/></svg>
<div class="t" style="left:492.5px;top:549px;width:40px;text-align:center;font:11px 'Liberation Sans',sans-serif;line-height:20px">46</div>
<svg style="position:absolute;left:529px;top:557px" width="10" height="7" shape-rendering="crispEdges"><rect x="0" y="3" width="10" height="1"/><rect x="6" y="0" width="1" height="1"/><rect x="7" y="1" width="1" height="1"/><rect x="8" y="2" width="1" height="3"/><rect x="7" y="5" width="1" height="1"/><rect x="6" y="6" width="1" height="1"/></svg>
<div class="t" style="left:148.5px;top:567px;width:40px;text-align:center;font:11px 'Liberation Sans',sans-serif;line-height:20px">48</div>
<svg style="position:absolute;left:185px;top:575px" width="10" height="7" shape-rendering="crispEdges"><rect x="0" y="3" width="10" height="1"/><rect x="6" y="0" width="1" height="1"/><rect x="7" y="1" width="1" height="1"/><rect x="8" y="2" width="1" height="3"/><rect x="7" y="5" width="1" height="1"/><rect x="6" y="6" width="1" height="1"/></svg>
<div class="t" style="left:191.5px;top:567px;width:40px;text-align:center;font:11px 'Liberation Sans',sans-serif;line-height:20px">14</div>
<svg style="position:absolute;left:228px;top:575px" width="10" height="7" shape-rendering="crispEdges"><rect x="0" y="3" width="10" height="1"/><rect x="6" y="0" width="1" height="1"/><rect x="7" y="1" width="1" height="1"/><rect x="8" y="2" width="1" height="3"/><rect x="7" y="5" width="1" height="1"/><rect x="6" y="6" width="1" height="1"/></svg>
<div class="t" style="left:234.5px;top:567px;width:40px;text-align:center;font:11px 'Liberation Sans',sans-serif;line-height:20px">35</div>
<svg style="position:absolute;left:271px;top:575px" width="10" height="7" shape-rendering="crispEdges"><rect x="0" y="3" width="10" height="1"/><rect x="6" y="0" width="1" height="1"/><rect x="7" y="1" width="1" height="1"/><rect x="8" y="2" width="1" height="3"/><rect x="7" y="5" width="1" height="1"/><rect x="6" y="6" width="1" height="1"/></svg>
<div class="t" style="left:277.5px;top:567px;width:40px;text-align:center;font:11px 'Liberation Sans',sans-serif;line-height:20px">19</div>
<svg style="position:absolute;left:314px;top:575px" width="10" height="7" shape-rendering="crispEdges"><rect x="0" y="3" width="10" height="1"/><rect x="6" y="0" width="1" height="1"/><rect x="7" y="1" width="1" height="1"/><rect x="8" y="2" width="1" height="3"/><rect x="7" y="5" width="1" height="1"/><rect x="6" y="6" width="1" height="1"/></svg>
<div class="t" style="left:320.5px;top:567px;width:40px;text-align:center;font:11px 'Liberation Sans',sans-serif;line-height:20px">24</div>
<svg style="position:absolute;left:357px;top:575px" width="10" height="7" shape-rendering="crispEdges"><rect x="0" y="3" width="10" height="1"/><rect x="6" y="0" width="1" height="1"/><rect x="7" y="1" width="1" height="1"/><rect x="8" y="2" width="1" height="3"/><rect x="7" y="5" width="1" height="1"/><rect x="6" y="6" width="1" height="1"/></svg>
<div class="t" style="left:363.5px;top:567px;width:40px;text-align:center;font:11px 'Liberation Sans',sans-serif;line-height:20px">13</div>
<svg style="position:absolute;left:400px;top:575px" width="10" height="7" shape-rendering="crispEdges"><rect x="0" y="3" width="10" height="1"/><rect x="6" y="0" width="1" height="1"/><rect x="7" y="1" width="1" height="1"/><rect x="8" y="2" width="1" height="3"/><rect x="7" y="5" width="1" height="1"/><rect x="6" y="6" width="1" height="1"/></svg>
<div class="t" style="left:406.5px;top:567px;width:40px;text-align:center;font:11px 'Liberation Sans',sans-serif;line-height:20px">21</div>
<svg style="position:absolute;left:443px;top:575px" width="10" height="7" shape-rendering="crispEdges"><rect x="0" y="3" width="10" height="1"/><rect x="6" y="0" width="1" height="1"/><rect x="7" y="1" width="1" height="1"/><rect x="8" y="2" width="1" height="3"/><rect x="7" y="5" width="1" height="1"/><rect x="6" y="6" width="1" height="1"/></svg>
<div class="t" style="left:449.5px;top:567px;width:40px;text-align:center;font:11px 'Liberation Sans',sans-serif;line-height:20px">38</div>
<svg style="position:absolute;left:486px;top:575px" width="10" height="7" shape-rendering="crispEdges"><rect x="0" y="3" width="10" height="1"/><rect x="6" y="0" width="1" height="1"/><rect x="7" y="1" width="1" height="1"/><rect x="8" y="2" width="1" height="3"/><rect x="7" y="5" width="1" height="1"/><rect x="6" y="6" width="1" height="1"/></svg>
<div class="t" style="left:492.5px;top:567px;width:40px;text-align:center;font:11px 'Liberation Sans',sans-serif;line-height:20px">43</div>
<svg style="position:absolute;left:529px;top:575px" width="10" height="7" shape-rendering="crispEdges"><rect x="0" y="3" width="10" height="1"/><rect x="6" y="0" width="1" height="1"/><rect x="7" y="1" width="1" height="1"/><rect x="8" y="2" width="1" height="3"/><rect x="7" y="5" width="1" height="1"/><rect x="6" y="6" width="1" height="1"/></svg>
<div class="t" style="left:148.5px;top:585px;width:40px;text-align:center;font:11px 'Liberation Sans',sans-serif;line-height:20px">25</div>
<svg style="position:absolute;left:185px;top:593px" width="10" height="7" shape-rendering="crispEdges"><rect x="0" y="3" width="10" height="1"/><rect x="6" y="0" width="1" height="1"/><rect x="7" y="1" width="1" height="1"/><rect x="8" y="2" width="1" height="3"/><rect x="7" y="5" width="1" height="1"/><rect x="6" y="6" width="1" height="1"/></svg>
<div class="t" style="left:191.5px;top:585px;width:40px;text-align:center;font:11px 'Liberation Sans',sans-serif;line-height:20px">4</div>
<svg style="position:absolute;left:228px;top:593px" width="10" height="7" shape-rendering="crispEdges"><rect x="0" y="3" width="10" height="1"/><rect x="6" y="0" width="1" height="1"/><rect x="7" y="1" width="1" height="1"/><rect x="8" y="2" width="1" height="3"/><rect x="7" y="5" width="1" height="1"/><rect x="6" y="6" width="1" height="1"/></svg>
<div class="t" style="left:234.5px;top:585px;width:40px;text-align:center;font:11px 'Liberation Sans',sans-serif;line-height:20px">34</div>
<svg style="position:absolute;left:271px;top:593px" width="10" height="7" shape-rendering="crispEdges"><rect x="0" y="3" width="10" height="1"/><rect x="6" y="0" width="1" height="1"/><rect x="7" y="1" width="1" height="1"/><rect x="8" y="2" width="1" height="3"/><rect x="7" y="5" width="1" height="1"/><rect x="6" y="6" width="1" height="1"/></svg>
<div class="t" style="left:277.5px;top:585px;width:40px;text-align:center;font:11px 'Liberation Sans',sans-serif;line-height:20px">12</div>
<svg style="position:absolute;left:314px;top:593px" width="10" height="7" shape-rendering="crispEdges"><rect x="0" y="3" width="10" height="1"/><rect x="6" y="0" width="1" height="1"/><rect x="7" y="1" width="1" height="1"/><rect x="8" y="2" width="1" height="3"/><rect x="7" y="5" width="1" height="1"/><rect x="6" y="6" width="1" height="1"/></svg>
<div class="t" style="left:320.5px;top:585px;width:40px;text-align:center;font:11px 'Liberation Sans',sans-serif;line-height:20px">16</div>
<svg style="position:absolute;left:357px;top:593px" width="10" height="7" shape-rendering="crispEdges"><rect x="0" y="3" width="10" height="1"/><rect x="6" y="0" width="1" height="1"/><rect x="7" y="1" width="1" height="1"/><rect x="8" y="2" width="1" height="3"/><rect x="7" y="5" width="1" height="1"/><rect x="6" y="6" width="1" height="1"/></svg>
<div class="t" style="left:363.5px;top:585px;width:40px;text-align:center;font:11px 'Liberation Sans',sans-serif;line-height:20px">27</div>
<svg style="position:absolute;left:400px;top:593px" width="10" height="7" shape-rendering="crispEdges"><rect x="0" y="3" width="10" height="1"/><rect x="6" y="0" width="1" height="1"/><rect x="7" y="1" width="1" height="1"/><rect x="8" y="2" width="1" height="3"/><rect x="7" y="5" width="1" height="1"/><rect x="6" y="6" width="1" height="1"/></svg>
<div class="t" style="left:406.5px;top:585px;width:40px;text-align:center;font:11px 'Liberation Sans',sans-serif;line-height:20px">2</div>
<svg style="position:absolute;left:443px;top:593px" width="10" height="7" shape-rendering="crispEdges"><rect x="0" y="3" width="10" height="1"/><rect x="6" y="0" width="1" height="1"/><rect x="7" y="1" width="1" height="1"/><rect x="8" y="2" width="1" height="3"/><rect x="7" y="5" width="1" height="1"/><rect x="6" y="6" width="1" height="1"/></svg>
<div class="t" style="left:449.5px;top:585px;width:40px;text-align:center;font:11px 'Liberation Sans',sans-serif;line-height:20px">7</div>
<svg style="position:absolute;left:486px;top:593px" width="10" height="7" shape-rendering="crispEdges"><rect x="0" y="3" width="10" height="1"/><rect x="6" y="0" width="1" height="1"/><rect x="7" y="1" width="1" height="1"/><rect x="8" y="2" width="1" height="3"/><rect x="7" y="5" width="1" height="1"/><rect x="6" y="6" width="1" height="1"/></svg>
<div class="t" style="left:492.5px;top:585px;width:40px;text-align:center;font:11px 'Liberation Sans',sans-serif;line-height:20px">18</div>
<svg style="position:absolute;left:529px;top:593px" width="10" height="7" shape-rendering="crispEdges"><rect x="0" y="3" width="10" height="1"/><rect x="6" y="0" width="1" height="1"/><rect x="7" y="1" width="1" height="1"/><rect x="8" y="2" width="1" height="3"/><rect x="7" y="5" width="1" height="1"/><rect x="6" y="6" width="1" height="1"/></svg>
<div class="t" style="left:148.5px;top:603px;width:40px;text-align:center;font:11px 'Liberation Sans',sans-serif;line-height:20px">36</div>
<svg style="position:absolute;left:185px;top:611px" width="10" height="7" shape-rendering="crispEdges"><rect x="0" y="3" width="10" height="1"/><rect x="6" y="0" width="1" height="1"/><rect x="7" y="1" width="1" height="1"/><rect x="8" y="2" width="1" height="3"/><rect x="7" y="5" width="1" height="1"/><rect x="6" y="6" width="1" height="1"/></svg>
<div class="t" style="left:191.5px;top:603px;width:40px;text-align:center;font:11px 'Liberation Sans',sans-serif;line-height:20px">8</div>
<svg style="position:absolute;left:228px;top:611px" width="10" height="7" shape-rendering="crispEdges"><rect x="0" y="3" width="10" height="1"/><rect x="6" y="0" width="1" height="1"/><rect x="7" y="1" width="1" height="1"/><rect x="8" y="2" width="1" height="3"/><rect x="7" y="5" width="1" height="1"/><rect x="6" y="6" width="1" height="1"/></svg>
<div class="t" style="left:234.5px;top:603px;width:40px;text-align:center;font:11px 'Liberation Sans',sans-serif;line-height:20px">39</div>
<svg style="position:absolute;left:271px;top:611px" width="10" height="7" shape-rendering="crispEdges"><rect x="0" y="3" width="10" height="1"/><rect x="6" y="0" width="1" height="1"/><rect x="7" y="1" width="1" height="1"/><rect x="8" y="2" width="1" height="3"/><rect x="7" y="5" width="1" height="1"/><rect x="6" y="6" width="1" height="1"/></svg>
<div class="t" style="left:277.5px;top:603px;width:40px;text-align:center;font:11px 'Liberation Sans',sans-serif;line-height:20px">6</div>
<svg style="position:absolute;left:314px;top:611px" width="10" height="7" shape-rendering="crispEdges"><rect x="0" y="3" width="10" height="1"/><rect x="6" y="0" width="1" height="1"/><rect x="7" y="1" width="1" height="1"/><rect x="8" y="2" width="1" height="3"/><rect x="7" y="5" width="1" height="1"/><rect x="6" y="6" width="1" height="1"/></svg>
<div class="t" style="left:320.5px;top:603px;width:40px;text-align:center;font:11px 'Liberation Sans',sans-serif;line-height:20px">41</div>
<svg style="position:absolute;left:357px;top:611px" width="10" height="7" shape-rendering="crispEdges"><rect x="0" y="3" width="10" height="1"/><rect x="6" y="0" width="1" height="1"/><rect x="7" y="1" width="1" height="1"/><rect x="8" y="2" width="1" height="3"/><rect x="7" y="5" width="1" height="1"/><rect x="6" y="6" width="1" height="1"/></svg>
<div class="t" style="left:363.5px;top:603px;width:40px;text-align:center;font:11px 'Liberation Sans',sans-serif;line-height:20px">1</div>
</div></body></html>
